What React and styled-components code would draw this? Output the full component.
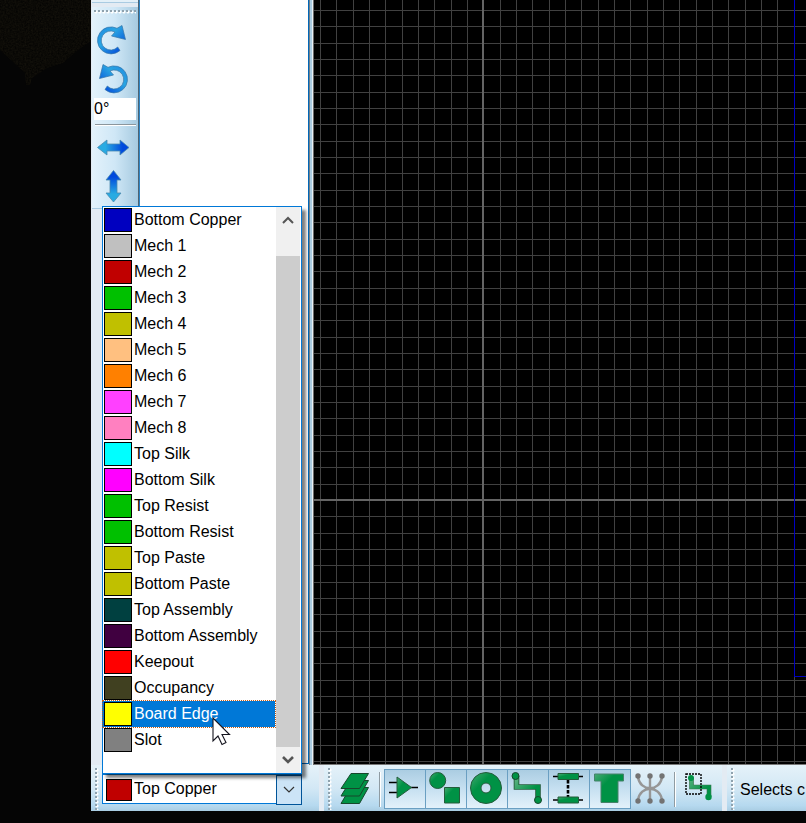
import React from "react";
import styled, { createGlobalStyle } from "styled-components";

const GlobalStyle = createGlobalStyle`
  *, *::before, *::after { box-sizing: border-box; }
  body {
    margin: 0;
    background: #050505;
    color: #000;
    font: 16px/24px "Liberation Sans", Arial, sans-serif;
    overflow: hidden;
  }
  button, input, select { font: inherit; color: inherit; margin: 0; }
`;

const Desktop = styled.div`
  display: flex;
  min-height: 100vh;
  padding-bottom: 12px;
  background: #050505;
`;

const Wallpaper = styled.div`
  flex: 0 0 91px;
  svg { display: block; }
`;

const Window = styled.main`
  flex: 1;
  min-width: 0;
  display: flex;
  flex-direction: column;
  background: #e3ebf3;
`;

const Workspace = styled.div`
  flex: 1;
  display: flex;
  min-height: 0;
`;

const ToolColumn = styled.aside`
  flex: 0 0 47px;
  padding-left: 1px;
`;

const ToolEdge = styled.div`
  height: 7px;
  border-bottom: 4px solid #e3ebf3;
  background: linear-gradient(#e3f0f8 2px, #a9cbe2 2px);
`;

const ToolPalette = styled.div`
  display: flex;
  flex-direction: column;
  height: 202px;
  padding: 3px 2px 0;
  border-bottom: 1px solid #a9cbe2;
  background: linear-gradient(to right, #e3f2fb, #cfe7f6 50%, #a6cae0);
`;

const Grip = styled.span`
  flex: none;
  width: ${(p) => (p.$vertical ? "4px" : "auto")};
  height: ${(p) => (p.$vertical ? "42px" : "4px")};
  margin: ${(p) => (p.$vertical ? "0 -1px 0 0" : "0 0 -1px")};
  background-image:
    radial-gradient(circle at 1px 1px, #8fa2ae 1px, transparent 1px),
    radial-gradient(circle at 2px 2px, #fff 1px, transparent 2px);
  background-size: 4px 4px;
`;

const ToolButton = styled.button`
  display: flex;
  align-items: center;
  justify-content: center;
  width: 38px;
  height: 39px;
  padding: 0;
  border: 0;
  background: none;
`;

const RotateTools = styled.div`
  padding-top: 7px;
`;

const AngleInput = styled.input`
  width: 42px;
  height: 22px;
  padding: 0;
  border: 0;
  background: #fff;
  outline: 0;
`;

const ToolRule = styled.hr`
  width: 41px;
  height: 2px;
  margin: 4px 0 2px 1px;
  border: 0;
  background: linear-gradient(#8c969c 1px, #fff 1px);
`;

const SidePanel = styled.section`
  flex: 0 0 171px;
  border-left: 1px solid #4f6472;
  border-right: 1px solid #0067b8;
  border-bottom: 1px solid #0067b8;
  margin-bottom: 1px;
  background: #fff;
  box-shadow: inset 1px 0 #2f86c6;
`;

const Splitter = styled.div`
  flex: 0 0 5px;
  border-left: 1px solid #75818a;
  border-right: 1px solid #6c6c6c;
  background: #aacbe0;
  box-shadow: inset -1px 0 #e9f1f6;
`;

const Board = styled.section`
  flex: 1;
  min-width: 0;
  background: #000;
  border-bottom: 1px solid #777;
  overflow: hidden;
  display: flex;
  svg { display: block; width: 100%; height: 100%; }
`;

const BottomBar = styled.footer`
  flex: none;
  display: flex;
  gap: 5px;
  height: 46px;
`;

const BarSection = styled.div`
  flex: ${(p) => (p.$grow ? "1 1 0" : "none")};
  width: ${(p) => p.$width || "auto"};
  min-width: 0;
  display: flex;
  padding: 3px 0 0 4px;
  background: linear-gradient(#e5f2f9, #d3e8f5 50%, #b6d9ef 88%, #a9cde3);
  overflow: ${(p) => (p.$grow ? "hidden" : "visible")};
`;

const LayerCombo = styled.div`
  position: relative;
  display: grid;
  grid-template-columns: 26px 1fr 25px;
  width: 200px;
  height: 30px;
  margin: 6px 0 0 4px;
  padding-left: 3px;
  align-items: center;
  border: 1px solid #0078d7;
  background: #fff;
`;

const Swatch = styled.span`
  flex: none;
  width: ${(p) => (p.$small ? "26px" : "28px")};
  height: ${(p) => (p.$small ? "22px" : "24px")};
  border: 1px solid #000;
  background: ${(p) => p.$color};
`;

const LayerSelect = styled.select`
  appearance: none;
  height: 28px;
  padding: 0 2px 2px;
  border: 0;
  background: none;
  outline: 0;
`;

const ComboArrow = styled.span`
  display: flex;
  align-items: center;
  justify-content: center;
  height: 30px;
  margin-right: -1px;
  border: 1px solid #005499;
  background: #cce4f7;
  pointer-events: none;
`;

const LayerMenu = styled.div`
  position: absolute;
  z-index: 2;
  left: -1px;
  right: -1px;
  bottom: calc(100% + 1px);
  display: flex;
  padding-right: 1px;
  border: 1px solid #0078d7;
  background: #fff;
  box-shadow: 4px 4px 3px rgba(0, 0, 0, 0.5);
`;

const LayerList = styled.ul`
  flex: 1;
  margin: 0;
  padding: 0 1px 20px 0;
  list-style: none;
`;

const LayerItem = styled.li`
  position: relative;
  display: flex;
  align-items: center;
  gap: 2px;
  height: 26px;
  padding-left: 1px;
  white-space: nowrap;
  color: ${(p) => (p.$active ? "#fff" : "#000")};
  background: ${(p) => (p.$active ? "#0078d7" : "transparent")};
  outline: ${(p) => (p.$active ? "1px dotted #c65b13" : "0")};
  z-index: ${(p) => (p.$active ? 1 : 0)};
`;

const Pointer = styled.svg`
  position: absolute;
  left: 109px;
  top: 16px;
`;

const Scrollbar = styled.div`
  flex: 0 0 24px;
  display: flex;
  flex-direction: column;
  background: #f0f0f0;
`;

const ScrollButton = styled.button`
  display: flex;
  align-items: center;
  justify-content: center;
  height: 26px;
  padding: 0;
  border: 0;
  background: #f0f0f0;
`;

const ScrollThumb = styled.div`
  flex: 1;
  margin-top: 23px;
  background: #cdcdcd;
`;

const FilterTools = styled.div`
  display: flex;
  align-items: center;
  height: 40px;
  margin-top: 1px;
`;

const FilterButton = styled.button`
  display: flex;
  align-items: center;
  justify-content: center;
  width: ${(p) => (p.$pressed ? "42px" : "40px")};
  height: 40px;
  margin-right: ${(p) => (p.$pressed ? "-1px" : "0")};
  padding: 0;
  border: ${(p) => (p.$pressed ? "1px solid #6a9fc2" : "0")};
  background: ${(p) => (p.$pressed ? "linear-gradient(#abcde2, #c6e0f1 50%, #e3f1fa)" : "none")};
`;

const LayersButton = styled(FilterButton)`
  margin-left: 5px;
`;

const BarRule = styled.span`
  width: 2px;
  height: 35px;
  margin: 0 ${(p) => (p.$wide ? "3px" : "4px")};
  background: linear-gradient(to right, #8f9ba2 1px, #fff 1px);
`;

const StatusText = styled.span`
  padding: 10px 0 0 6px;
  white-space: nowrap;
`;

const layers = [
  ["Bottom Copper", "#0000c0"],
  ["Mech 1", "#c0c0c0"],
  ["Mech 2", "#c00000"],
  ["Mech 3", "#00c000"],
  ["Mech 4", "#c0c000"],
  ["Mech 5", "#ffc080"],
  ["Mech 6", "#ff8000"],
  ["Mech 7", "#ff40ff"],
  ["Mech 8", "#ff80c0"],
  ["Top Silk", "#00ffff"],
  ["Bottom Silk", "#ff00ff"],
  ["Top Resist", "#00c000"],
  ["Bottom Resist", "#00c000"],
  ["Top Paste", "#c0c000"],
  ["Bottom Paste", "#c0c000"],
  ["Top Assembly", "#004040"],
  ["Bottom Assembly", "#400040"],
  ["Keepout", "#ff0000"],
  ["Occupancy", "#404020"],
  ["Board Edge", "#ffff00"],
  ["Slot", "#808080"],
];

function BlueGradient({ id, vertical }) {
  return (
    <linearGradient id={id} x1="0" y1={vertical ? "1" : "0"} x2={vertical ? "0" : "1"} y2="0">
      <stop offset="0.25" stopColor="#29abe2" />
      <stop offset="0.8" stopColor="#0049dc" />
    </linearGradient>
  );
}

function RotateIcon({ flip }) {
  const id = flip ? "ccw" : "cw";
  return (
    <svg width="32" height="30" viewBox="0 0 32 30" aria-hidden="true">
      <defs>
        <linearGradient id={id} x1="0" y1="0" x2="1" y2="1">
          <stop offset="0" stopColor="#1f86e0" />
          <stop offset="0.4" stopColor="#29a5e2" />
          <stop offset="0.8" stopColor="#0a5cdc" />
          <stop offset="1" stopColor="#0046db" />
        </linearGradient>
      </defs>
      <path
        d="M23 25.5 A13.5 13.5 0 1 1 20 3.3 L25 .5 L28.5 14.5 L14.5 11 L18 7 A9.5 9.5 0 1 0 20.7 22 Z"
        transform={flip ? "translate(31 0) scale(-1 1)" : undefined}
        fill={`url(#${id})`}
        stroke="#3776a8"
        strokeWidth="0.7"
      />
    </svg>
  );
}

function MirrorIcon({ vertical }) {
  const id = vertical ? "mirrorV" : "mirrorH";
  return vertical ? (
    <svg width="17" height="33" viewBox="0 0 17 33" aria-hidden="true">
      <defs><BlueGradient id={id} vertical /></defs>
      <path d="M8.5 .5 L16 10 H12 V23 H16 L8.5 32 L1 23 H5 V10 H1 Z" fill={`url(#${id})`} stroke="#4b8caf" strokeWidth="0.8" />
    </svg>
  ) : (
    <svg width="33" height="17" viewBox="0 0 33 17" aria-hidden="true">
      <defs><BlueGradient id={id} /></defs>
      <path d="M.5 8.5 L10 1 V5 H23 V1 L32 8.5 L23 16 V12 H10 V16 Z" fill={`url(#${id})`} stroke="#4b8caf" strokeWidth="0.8" />
    </svg>
  );
}

function Chevron({ up, thin }) {
  return (
    <svg width="14" height="10" viewBox="0 0 14 10" aria-hidden="true">
      <path
        d={up ? "M2 8 L7 3 L12 8" : "M2 2 L7 7 L12 2"}
        fill="none"
        stroke={thin ? "#333" : "#555"}
        strokeWidth={thin ? 1.2 : up ? 2 : 2.6}
      />
    </svg>
  );
}

const green = { fill: "url(#green)", stroke: "#245c3b", strokeWidth: 1 };

function GreenIcon({ kind }) {
  return (
    <svg width="34" height="34" viewBox="0 0 34 34" aria-hidden="true">
      <defs>
        <linearGradient id="green" x1="0" y1="0" x2="0.6" y2="0.6">
          <stop offset="0" stopColor="#48aa73" />
          <stop offset="0.6" stopColor="#009245" />
        </linearGradient>
        <linearGradient id="trace" gradientUnits="userSpaceOnUse" x1="4" y1="4" x2="20" y2="20">
          <stop offset="0" stopColor="#66b588" />
          <stop offset="1" stopColor="#009245" />
        </linearGradient>
      </defs>
      {kind === "layers" && (
        <g fill="#009245" stroke="#17472c" strokeWidth="1">
          <path d="M2 31.5 L11.5 15.5 H29.5 L20.5 31.5 Z" />
          <path d="M2 24 L11.5 8.5 H29.5 L20.5 24 Z" />
          <path d="M2 16.5 L12 1.5 H29.5 L20.5 16.5 Z" />
        </g>
      )}
      {kind === "gate" && (
        <g>
          <path d="M1 10.5 H9 M1 20.5 H9 M23 15.5 H30" stroke="#000" strokeWidth="1.5" />
          <path d="M9 5 V26 L23.5 15.5 Z" {...green} />
        </g>
      )}
      {kind === "shapes" && (
        <g>
          <circle cx="8.7" cy="8.5" r="8" {...green} />
          <path d="M15.5 15.5 H30.5 V31 H15.5 Z" {...green} />
        </g>
      )}
      {kind === "pad" && (
        <path fillRule="evenodd" d="M16 .5 A15.5 15.5 0 1 1 16 31.5 A15.5 15.5 0 1 1 16 .5 M16 11 A5 5 0 1 0 16 21 A5 5 0 1 0 16 11" {...green} />
      )}
      {kind === "track" && (
        <g fill="none">
          <path d="M5.5 4 V15 H27 V28" stroke="#245c3b" strokeWidth="5.6" />
          <path d="M5.5 4 V15 H27 V28" stroke="url(#trace)" strokeWidth="3.8" />
          <circle cx="4.5" cy="4" r="3.5" fill="#009245" stroke="#17472c" />
          <circle cx="27" cy="28" r="3.5" fill="#009245" stroke="#17472c" />
        </g>
      )}
      {kind === "component" && (
        <g>
          <path d="M1 4.5 H31 M1 28 H31" stroke="#000" strokeWidth="1.5" />
          <path d="M16 8 V25" stroke="#000" strokeWidth="2.6" strokeDasharray="3.5 1.5" />
          <path d="M6 1.5 H26.5 V7.5 H6 Z" {...green} />
          <path d="M6 25 H26.5 V31 H6 Z" {...green} />
        </g>
      )}
      {kind === "text" && <path d="M1.5 2 H30.5 V9 H25 V30.5 H8 V9 H1.5 Z" {...green} stroke="#46826a" />}
      {kind === "ratsnest" && (
        <g fill="none" stroke="#969696" strokeWidth="2.4">
          <path d="M5 5 C7 20 27 20 29 5 M5 28 C7 13 27 13 29 28 M17 5 V28" />
          <g fill="#737373" stroke="none">
            {[5, 17, 29].map((x) => (
              <React.Fragment key={x}>
                <circle cx={x} cy="4" r="2.7" />
                <circle cx={x} cy="29" r="2.7" />
              </React.Fragment>
            ))}
          </g>
        </g>
      )}
      {kind === "select" && (
        <g fill="none">
          <path d="M8.5 6 V15 H26 V25" stroke="#3d7552" strokeWidth="4.6" />
          <path d="M8.5 6 V15 H26 V25" stroke="url(#trace)" strokeWidth="3.4" />
          <circle cx="8" cy="6" r="3" fill="#009245" />
          <circle cx="25.5" cy="25" r="3.2" fill="#009245" />
          <path d="M3 2 H18 V22 H3 Z" stroke="#000" strokeWidth="1.4" strokeDasharray="2 1" />
        </g>
      )}
    </svg>
  );
}

function BoardDrawing() {
  return (
    <svg aria-label="Board layout" shapeRendering="crispEdges">
      <defs>
        <pattern id="grid" x="6" y="10" width="49" height="49" patternUnits="userSpaceOnUse">
          <path d="M.5 0 V49 M16.5 0 V49 M33.5 0 V49 M0 .5 H49 M0 16.5 H49 M0 33.5 H49" stroke="#414141" />
        </pattern>
      </defs>
      <rect width="100%" height="100%" fill="url(#grid)" />
      <path d="M169 0 V2000 M0 500 H3000" stroke="#646464" strokeWidth="2" />
      <path d="M480.5 0 V676.5 H3000" fill="none" stroke="#0000c0" />
    </svg>
  );
}

const filters = [
  ["gate", "Gates"],
  ["shapes", "Shapes"],
  ["pad", "Pads"],
  ["track", "Tracks"],
  ["component", "Components"],
  ["text", "Text"],
];

export default function App() {
  return (
    <Desktop>
      <GlobalStyle />
      <Wallpaper>
        <svg width="91" height="90" viewBox="0 0 91 90" aria-hidden="true">
          <defs>
            <filter id="grain" x="0" y="0" width="100%" height="100%" colorInterpolationFilters="sRGB">
              <feTurbulence type="fractalNoise" baseFrequency="0.6" numOctaves="2" seed="4" />
              <feColorMatrix values=".09 0 0 0 0  .08 0 0 0 0  .05 0 0 0 0  0 0 0 0 1" />
              <feComposite in2="SourceGraphic" operator="in" />
            </filter>
          </defs>
          <path d="M0 0 H91 V41 L78 50 L63 63 L47 68 L32 78 L30 85 H26 L25 73 L12 61 L0 50 Z" fill="#0c0b09" filter="url(#grain)" />
        </svg>
      </Wallpaper>
      <Window>
        <Workspace>
          <ToolColumn>
            <ToolEdge />
            <ToolPalette>
              <Grip />
              <RotateTools>
                <ToolButton aria-label="Rotate clockwise"><RotateIcon /></ToolButton>
                <ToolButton aria-label="Rotate anticlockwise"><RotateIcon flip /></ToolButton>
              </RotateTools>
              <AngleInput aria-label="Angle" defaultValue="0°" />
              <ToolRule />
              <ToolButton aria-label="Mirror horizontally"><MirrorIcon /></ToolButton>
              <ToolButton aria-label="Mirror vertically"><MirrorIcon vertical /></ToolButton>
            </ToolPalette>
          </ToolColumn>
          <SidePanel />
          <Splitter />
          <Board><BoardDrawing /></Board>
        </Workspace>
        <BottomBar>
          <BarSection $width="228px">
            <Grip $vertical />
            <LayerCombo>
              <Swatch $small $color="#c00000" />
              <LayerSelect aria-label="Current layer" defaultValue="Top Copper">
                <option>Top Copper</option>
                {layers.map(([name]) => <option key={name}>{name}</option>)}
              </LayerSelect>
              <ComboArrow><Chevron thin /></ComboArrow>
              <LayerMenu>
                <LayerList role="listbox" aria-label="Layers">
                  {layers.map(([name, color]) => {
                    const active = name === "Board Edge";
                    return (
                      <LayerItem key={name} role="option" aria-selected={active} $active={active}>
                        <Swatch $color={color} />
                        {name}
                        {active && (
                          <Pointer width="19" height="29" viewBox="0 0 19 29" aria-hidden="true">
                            <path d="M1 1 V24 L6 19 L10 27.5 L14 25.5 L10 17.5 H17.5 Z" fill="#fff" stroke="#14141e" strokeWidth="1.1" />
                          </Pointer>
                        )}
                      </LayerItem>
                    );
                  })}
                </LayerList>
                <Scrollbar>
                  <ScrollButton aria-label="Scroll up"><Chevron up /></ScrollButton>
                  <ScrollThumb />
                  <ScrollButton aria-label="Scroll down"><Chevron /></ScrollButton>
                </Scrollbar>
              </LayerMenu>
            </LayerCombo>
          </BarSection>
          <BarSection $width="398px">
            <Grip $vertical />
            <FilterTools>
              <LayersButton aria-label="Layers"><GreenIcon kind="layers" /></LayersButton>
              <BarRule $wide />
              {filters.map(([kind, label]) => (
                <FilterButton key={kind} $pressed aria-pressed="true" aria-label={label}>
                  <GreenIcon kind={kind} />
                </FilterButton>
              ))}
              <FilterButton aria-label="Connections"><GreenIcon kind="ratsnest" /></FilterButton>
              <BarRule />
              <FilterButton aria-label="Select net"><GreenIcon kind="select" /></FilterButton>
            </FilterTools>
          </BarSection>
          <BarSection $grow>
            <Grip $vertical />
            <StatusText>Selects c</StatusText>
          </BarSection>
        </BottomBar>
      </Window>
    </Desktop>
  );
}
